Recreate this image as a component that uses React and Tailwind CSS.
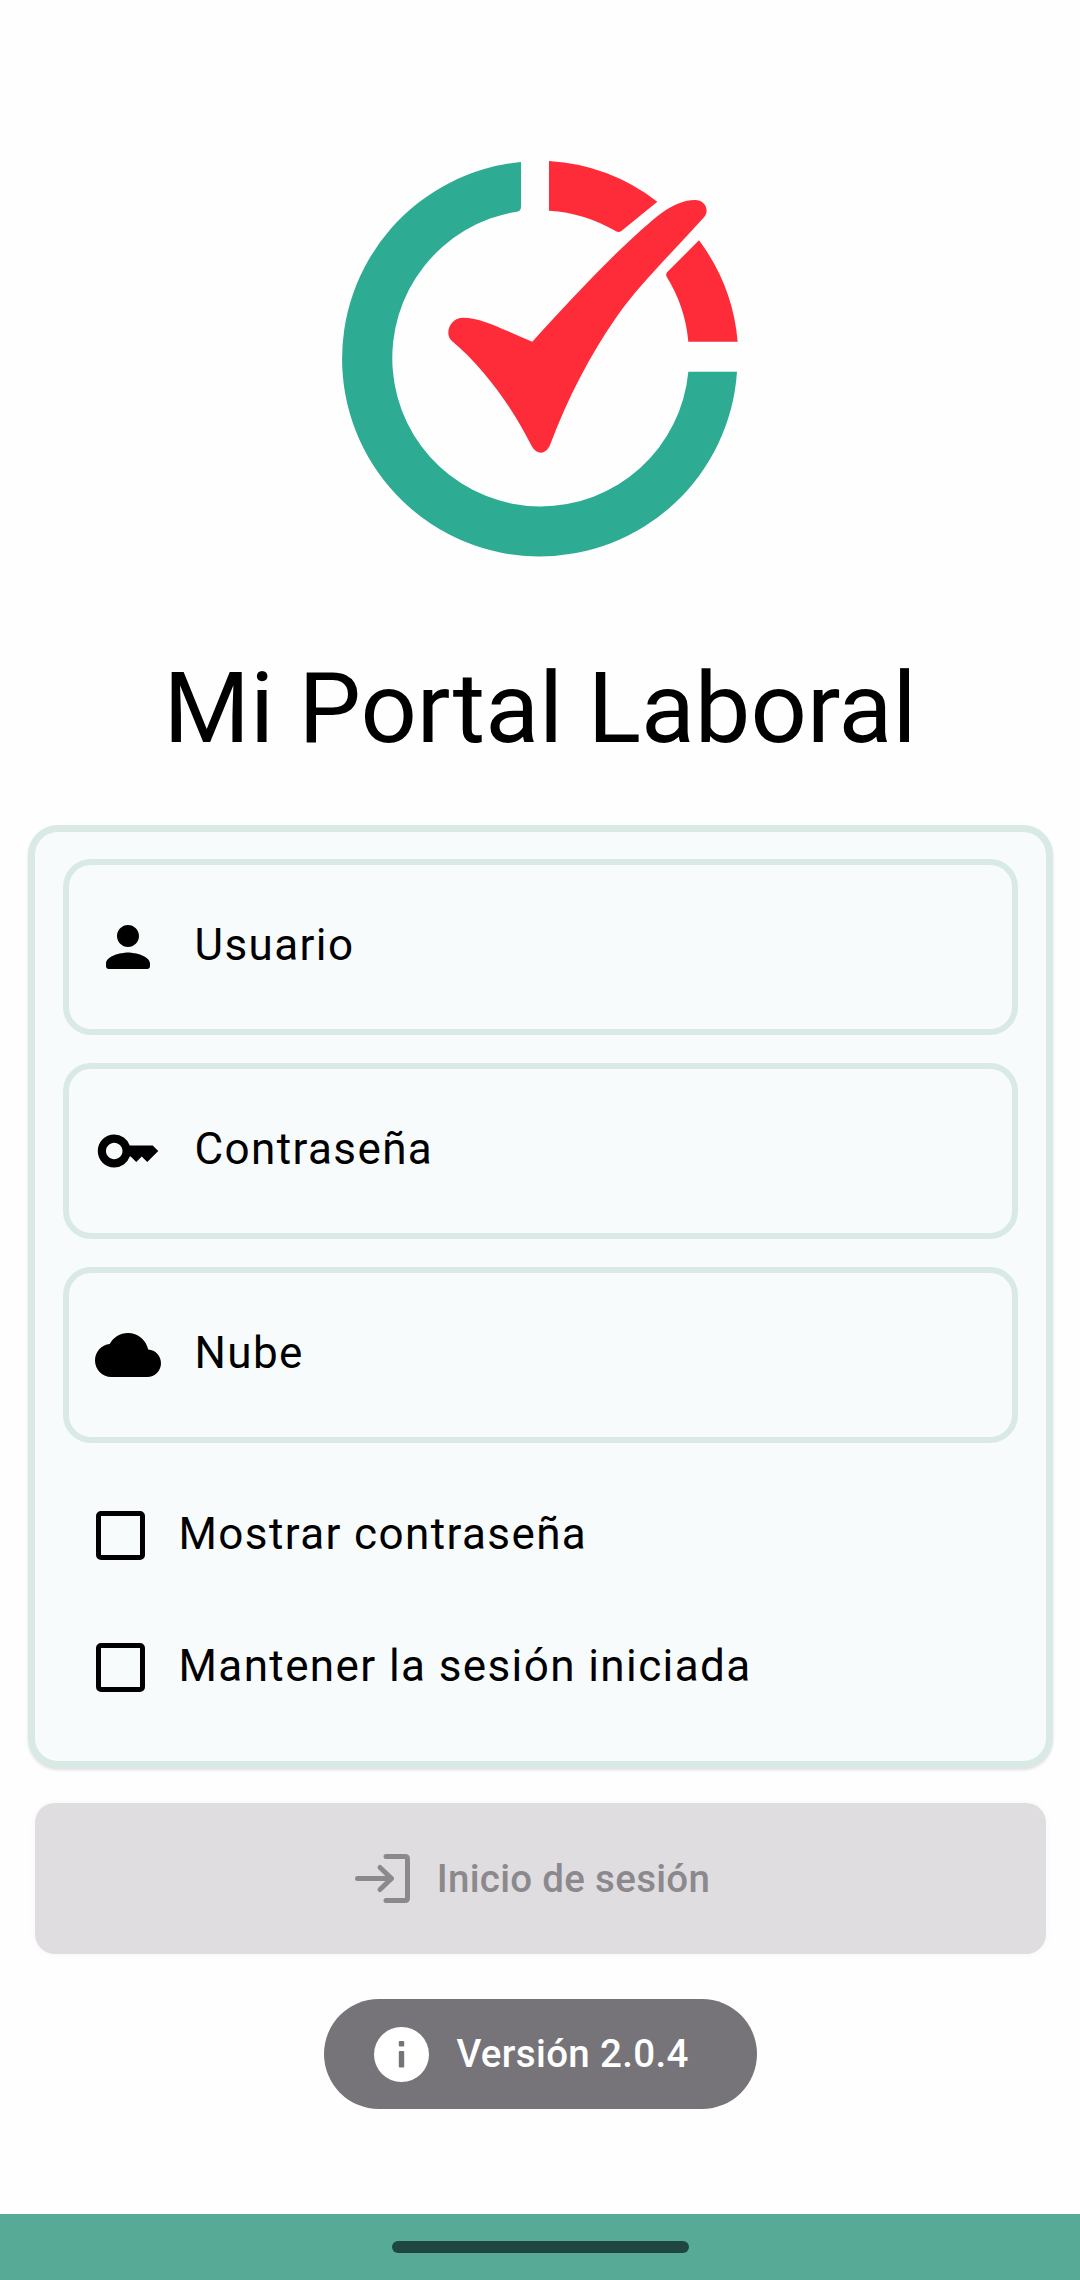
import React from 'react';

const Logo = () => (
  <svg viewBox="0 0 1320 1320" className="w-[440px] h-[440px]">
    <path fill="#2EAC93" d="M603 66A593 593 0 1 0 1251 695H1105A445 445 0 1 1 590 215Q603 213 603 200Z" />
    <path fill="#FE2C38" d="M687 63A592 592 0 0 1 1012 185L905 272Q897 279 888 274A445 445 0 0 0 687 212Z" />
    <path fill="#FE2C38" d="M1137 301A592 592 0 0 1 1253 605H1105A445 445 0 0 0 1040 410Q1036 402 1042 396Z" />
    <path
      fill="#FE2C38"
      d="M637 605C760 470 900 320 1010 230C1050 198 1090 180 1125 180C1155 180 1170 210 1152 232C1060 335 960 430 890 530C810 645 745 770 690 915C677 945 650 945 635 918C580 810 500 690 395 602C372 580 390 533 430 533C490 533 560 575 637 605Z"
    />
  </svg>
);

const PersonIcon = () => (
  <svg viewBox="0 0 24 24" className="w-[66px] h-[66px] shrink-0" fill="#000">
    <path d="M12 12c2.21 0 4-1.79 4-4s-1.79-4-4-4-4 1.79-4 4 1.79 4 4 4zm0 2c-2.67 0-8 1.34-8 4v1c0 .55.45 1 1 1h14c.55 0 1-.45 1-1v-1c0-2.66-5.33-4-8-4z" />
  </svg>
);

const KeyIcon = () => (
  <svg viewBox="0 0 24 24" className="w-[66px] h-[66px] shrink-0" fill="#000">
    <path d="M21 10h-8.35A5.99 5.99 0 0 0 7 6c-3.31 0-6 2.69-6 6s2.69 6 6 6a5.99 5.99 0 0 0 5.65-4H13l2 2 2-2 2 2 4-4.04L21 10zM7 15c-1.65 0-3-1.35-3-3s1.35-3 3-3 3 1.35 3 3-1.35 3-3 3z" />
  </svg>
);

const CloudIcon = () => (
  <svg viewBox="0 0 24 24" className="w-[66px] h-[66px] shrink-0" fill="#000">
    <path d="M19.35 10.04C18.67 6.59 15.64 4 12 4 9.11 4 6.6 5.64 5.35 8.04 2.34 8.36 0 10.91 0 14c0 3.31 2.69 6 6 6h13c2.76 0 5-2.24 5-5 0-2.64-2.05-4.78-4.65-4.96z" />
  </svg>
);

const LoginIcon = () => (
  <svg viewBox="0 0 55 49" className="w-[55px] h-[49px] shrink-0" fill="none" stroke="#8B898D" strokeWidth="5" strokeLinecap="round" strokeLinejoin="round">
    <path d="M31 2.5H50Q52.5 2.5 52.5 5V44Q52.5 46.5 50 46.5H31" />
    <path d="M2.5 24.5H36" />
    <path d="M25 13.5L36.5 24.5L25 35.5" />
  </svg>
);

const InfoIcon = () => (
  <svg viewBox="0 0 55 55" className="w-[55px] h-[55px] shrink-0">
    <circle cx="27.5" cy="27.5" r="27.5" fill="#fff" />
    <rect x="24.8" y="14" width="5.4" height="5.4" rx="1" fill="#767478" />
    <rect x="24.8" y="24" width="5.4" height="16.5" rx="1" fill="#767478" />
  </svg>
);

const Field = ({ icon, label }) => (
  <div className="h-[176px] border-[6px] border-[#D9EAE6] rounded-[28px] bg-[#F8FBFC] flex items-center pl-[26px] gap-[33.5px]">
    {icon}
    <span className="text-[44px] tracking-[1.4px] text-black pb-[4px]">{label}</span>
  </div>
);

const CheckRow = ({ label }) => (
  <div className="h-[132px] flex items-center pl-[61px] gap-[33.5px]">
    <div className="w-[49px] h-[49px] border-[5.5px] border-black rounded-[5px] shrink-0" />
    <span className="text-[44px] tracking-[1.4px] text-black pb-[2px]">{label}</span>
  </div>
);

export default function App() {
  return (
    <div className="w-[1080px] h-[2280px] bg-[#FFFEFF] flex flex-col font-['Roboto',sans-serif]">
      <div className="flex justify-center pt-[140px]">
        <Logo />
      </div>

      <h1 className="mt-[58px] h-[140px] flex items-center justify-center text-[99px] text-black font-normal">
        Mi Portal Laboral
      </h1>

      <div className="mt-[47px] ml-[28px] mr-[27px] h-[943px] border-[7px] border-[#D9EAE6] rounded-[30px] bg-[#F8FBFC] shadow-[0_2px_3px_rgba(0,0,0,0.12)] pt-[27px] px-[28px]">
        <div className="flex flex-col gap-[28px]">
          <Field icon={<PersonIcon />} label="Usuario" />
          <Field icon={<KeyIcon />} label="Contraseña" />
          <Field icon={<CloudIcon />} label="Nube" />
        </div>
        <div className="mt-[26px] -mx-[28px]">
          <CheckRow label="Mostrar contraseña" />
          <CheckRow label="Mantener la sesión iniciada" />
        </div>
      </div>

      <div className="mt-[35px] ml-[35px] mr-[34px] h-[151px] rounded-[20px] bg-[#DFDDE0] shadow-[0_0_6px_rgba(120,100,140,0.08)] flex items-center justify-center gap-[27px] pr-[16px]">
        <LoginIcon />
        <span className="text-[38.5px] font-medium tracking-[0.3px] text-[#8B898D]">Inicio de sesión</span>
      </div>

      <div className="mt-[45px] self-center w-[433px] h-[110px] rounded-full bg-[#767478] flex items-center pl-[50px] gap-[28px]">
        <InfoIcon />
        <span className="text-[38.5px] font-medium tracking-[0.35px] text-white">Versión 2.0.4</span>
      </div>

      <div className="mt-auto h-[66px] bg-[#57AA96] flex justify-center pt-[27px]">
        <div className="w-[297px] h-[12px] rounded-full bg-[#1F4640]" />
      </div>
    </div>
  );
}
